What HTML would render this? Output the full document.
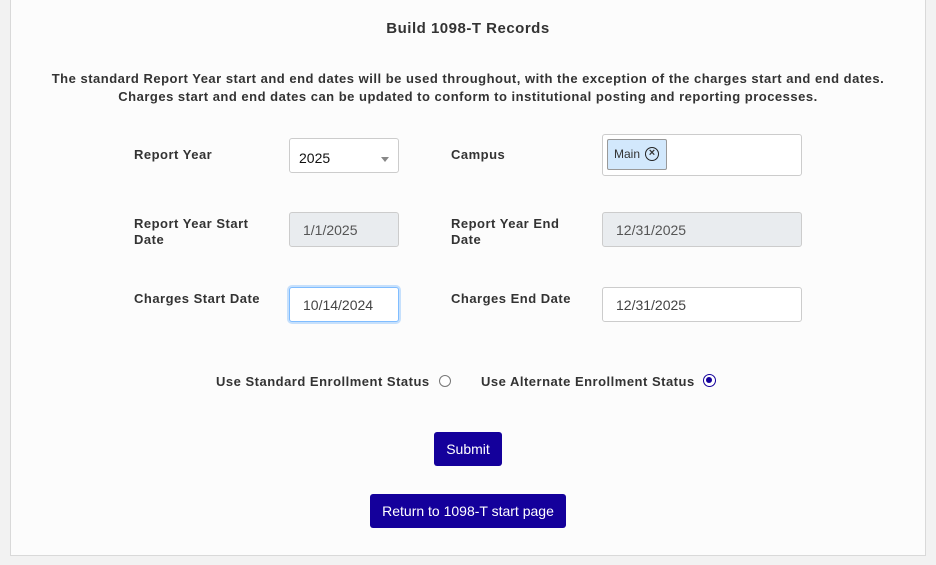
<!DOCTYPE html>
<html><head><style>
html,body{margin:0;padding:0;}
body{width:936px;height:565px;background:#f2f2f2;font-family:"Liberation Sans",Arial,sans-serif;position:relative;overflow:hidden;color:#333;}
.panel{position:absolute;left:10px;top:-2px;width:914px;height:556px;background:#fcfcfc;border:1px solid #d9d9d9;}
.a{position:absolute;}
.b{font-weight:bold;font-size:13px;color:#333;line-height:16px;letter-spacing:0.5px;}
.inp{position:absolute;box-sizing:border-box;border:1px solid #ccc;border-radius:3px;background:#fff;font-size:14px;color:#444;padding-left:13px;}
.btn{position:absolute;background:#14009b;color:#fff;font-size:14px;border-radius:3px;text-align:center;}
.radio{position:absolute;width:11px;height:11px;border:1px solid #777;border-radius:50%;background:#fff;box-sizing:border-box;}
</style></head><body>
<div class="panel"></div>
<div class="a b" style="left:0;width:936px;top:21px;text-align:center;font-size:15px;">Build 1098-T Records</div>
<div class="a b" style="left:0;width:936px;top:70px;text-align:center;line-height:18px;">The standard Report Year start and end dates will be used throughout, with the exception of the charges start and end dates.<br>Charges start and end dates can be updated to conform to institutional posting and reporting processes.</div>

<div class="a b" style="left:134px;top:147px;">Report Year</div>
<div class="inp" style="left:289px;top:138px;width:110px;height:35px;line-height:38px;padding-left:9px;color:#111;">2025</div>
<div class="a" style="left:381px;top:157px;width:0;height:0;border-left:4px solid transparent;border-right:4px solid transparent;border-top:5px solid #888;"></div>

<div class="a b" style="left:451px;top:147px;">Campus</div>
<div class="inp" style="left:602px;top:134px;width:200px;height:42px;"></div>
<div class="a" style="left:607px;top:139px;width:60px;height:31px;box-sizing:border-box;background:#d2e8fc;border:1px solid #999;border-radius:2px;font-size:12px;color:#333;line-height:28px;padding-left:6px;">Main<span style="position:absolute;left:37px;top:7px;width:14px;height:14px;border:1.5px solid #222;border-radius:50%;box-sizing:border-box;font-size:11px;line-height:11px;text-align:center;font-weight:bold;">×</span></div>

<div class="a b" style="left:134px;top:216px;">Report Year Start<br>Date</div>
<div class="inp" style="left:289px;top:212px;width:110px;height:35px;line-height:35px;background:#e9ecef;color:#555;">1/1/2025</div>
<div class="a b" style="left:451px;top:216px;">Report Year End<br>Date</div>
<div class="inp" style="left:602px;top:212px;width:200px;height:35px;line-height:35px;background:#e9ecef;color:#555;">12/31/2025</div>

<div class="a b" style="left:134px;top:291px;">Charges Start Date</div>
<div class="inp" style="left:289px;top:287px;width:110px;height:35px;line-height:35px;border-color:#80bdff;box-shadow:0 0 0 2px #c6e0fc;">10/14/2024</div>
<div class="a b" style="left:451px;top:291px;">Charges End Date</div>
<div class="inp" style="left:602px;top:287px;width:200px;height:35px;line-height:35px;">12/31/2025</div>

<div class="a b" style="left:216px;top:374px;">Use Standard Enrollment Status</div>
<div class="radio" style="left:439px;top:375px;width:12px;height:12px;"></div>
<div class="a b" style="left:481px;top:374px;">Use Alternate Enrollment Status</div>
<div class="radio" style="left:703px;top:374px;width:13px;height:13px;border:1.5px solid #14009b;"><div style="position:absolute;left:2px;top:2px;width:6px;height:6px;border-radius:50%;background:#14009b;"></div></div>

<div class="btn" style="left:434px;top:432px;width:68px;height:34px;line-height:34px;">Submit</div>
<div class="btn" style="left:370px;top:494px;width:196px;height:34px;line-height:34px;">Return to 1098-T start page</div>
</body></html>
